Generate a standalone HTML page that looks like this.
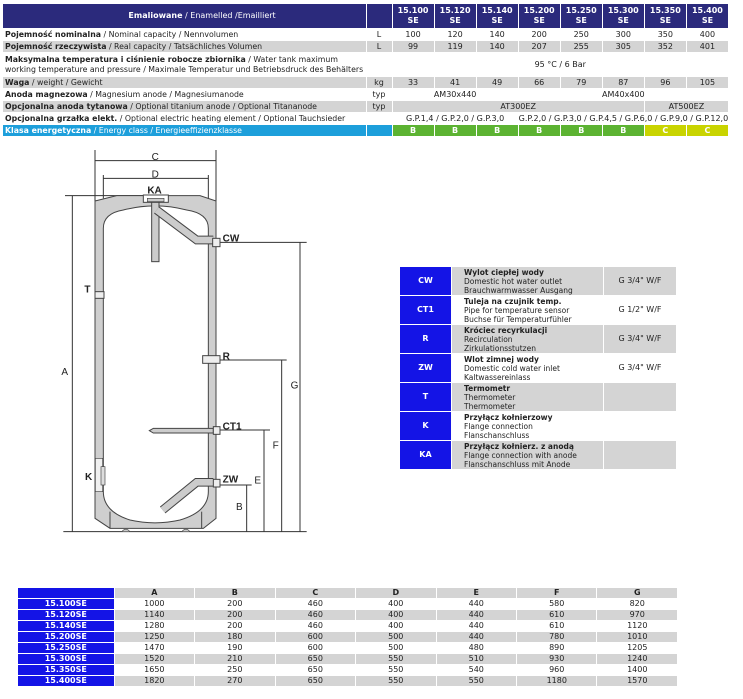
<!DOCTYPE html>
<html><head><meta charset="utf-8">
<style>
*{margin:0;padding:0;box-sizing:border-box}
body{width:743px;height:699px;background:#fff;position:relative;overflow:hidden;font-family:"DejaVu Sans","Liberation Sans",sans-serif;color:#222}
table{border-collapse:separate;border-spacing:1px;table-layout:fixed;position:absolute}
td{font-size:8px;white-space:nowrap;overflow:hidden;padding:0;line-height:10px}
#t1{left:2px;top:3px;width:727px}
#t1 td{text-align:center;height:11px}
#t1 td.l{text-align:left;padding-left:2px;font-size:7.8px}
.g{background:#d4d4d4}
.h{background:#2b2a7c;color:#fff;font-weight:bold}
.hb{background:#2b2a7c;color:#fff}
.cb{background:#1d9fdb;color:#fff}
.gr{background:#5cb332;color:#fff;font-weight:bold}
.ye{background:#c9d400;color:#fff;font-weight:bold}
#t2{left:399px;top:266px;width:278px}
#t2 td{height:28px;vertical-align:middle}
#t2 td.k{background:#1414e6;color:#fff;font-weight:bold;text-align:center;font-size:8px}
#t2 td.d{padding-left:12px;font-size:7.5px;line-height:9px}
#t2 td.v{text-align:center;font-size:8px}
#t3{left:17px;top:587px;width:661px}
#t3 td{height:10px;text-align:center;font-size:8px;line-height:10px}
#t3 td.bl{background:#1414e6;color:#fff;font-weight:bold}
</style></head><body>

<table id="t1">
<colgroup><col style="width:362px"><col style="width:25px"><col span="8" style="width:41px"></colgroup>
<tr style="height:24px"><td class="hb" style="height:24px">&nbsp;&nbsp;&nbsp;&nbsp;&nbsp;&nbsp;&nbsp;&nbsp;&nbsp;&nbsp;&nbsp;&nbsp;&nbsp;&nbsp;<b>Emaliowane</b> / Enamelled /Emailliert</td><td class="hb"></td>
<td class="h">15.100<br>SE</td><td class="h">15.120<br>SE</td><td class="h">15.140<br>SE</td><td class="h">15.200<br>SE</td><td class="h">15.250<br>SE</td><td class="h">15.300<br>SE</td><td class="h">15.350<br>SE</td><td class="h">15.400<br>SE</td></tr>
<tr><td class="l"><b>Pojemność nominalna</b> / Nominal capacity / Nennvolumen</td><td>L</td><td>100</td><td>120</td><td>140</td><td>200</td><td>250</td><td>300</td><td>350</td><td>400</td></tr>
<tr><td class="l g"><b>Pojemność rzeczywista</b> / Real capacity / Tatsächliches Volumen</td><td class="g">L</td><td class="g">99</td><td class="g">119</td><td class="g">140</td><td class="g">207</td><td class="g">255</td><td class="g">305</td><td class="g">352</td><td class="g">401</td></tr>
<tr><td class="l" style="height:23px"><b>Maksymalna temperatura i ciśnienie robocze zbiornika</b> / Water tank maximum<br>working temperature and pressure / Maximale Temperatur und Betriebsdruck des Behälters</td><td></td><td colspan="8">95 °C / 6 Bar</td></tr>
<tr><td class="l g"><b>Waga</b> / weight / Gewicht</td><td class="g">kg</td><td class="g">33</td><td class="g">41</td><td class="g">49</td><td class="g">66</td><td class="g">79</td><td class="g">87</td><td class="g">96</td><td class="g">105</td></tr>
<tr><td class="l"><b>Anoda magnezowa</b> / Magnesium anode / Magnesiumanode</td><td>typ</td><td colspan="3">AM30x440</td><td colspan="5">AM40x400</td></tr>
<tr><td class="l g"><b>Opcjonalna anoda tytanowa</b> / Optional titanium anode / Optional Titananode</td><td class="g">typ</td><td colspan="6" class="g">AT300EZ</td><td colspan="2" class="g">AT500EZ</td></tr>
<tr><td class="l"><b>Opcjonalna grzałka elekt.</b> / Optional electric heating element / Optional Tauchsieder</td><td></td><td colspan="3">G.P.1,4 / G.P.2,0 / G.P.3,0</td><td colspan="5">G.P.2,0 / G.P.3,0 / G.P.4,5 / G.P.6,0 / G.P.9,0 / G.P.12,0</td></tr>
<tr><td class="l cb"><b>Klasa energetyczna</b> / Energy class / Energieeffizienzklasse</td><td class="cb"></td><td class="gr">B</td><td class="gr">B</td><td class="gr">B</td><td class="gr">B</td><td class="gr">B</td><td class="gr">B</td><td class="ye">C</td><td class="ye">C</td></tr>
</table>

<svg style="position:absolute;left:40px;top:145px" width="300" height="400" viewBox="0 0 900 1200" font-family="Liberation Sans, sans-serif" font-size="30">
<g stroke="#333" stroke-width="3" fill="none">
<line x1="165" y1="15" x2="165" y2="170"/><line x1="528" y1="15" x2="528" y2="170"/>
<line x1="190" y1="90" x2="190" y2="160"/><line x1="505" y1="90" x2="505" y2="160"/>
<line x1="165" y1="47" x2="528" y2="47"/><line x1="190" y1="100" x2="505" y2="100"/>
<line x1="75" y1="152" x2="310" y2="152"/>
<line x1="97" y1="152" x2="97" y2="1160"/>
<line x1="70" y1="1160" x2="800" y2="1160"/>
<line x1="540" y1="292" x2="800" y2="292"/><line x1="780" y1="292" x2="780" y2="1160"/>
<line x1="540" y1="645" x2="740" y2="645"/><line x1="725" y1="645" x2="725" y2="1160"/>
<line x1="540" y1="855" x2="690" y2="855"/><line x1="672" y1="855" x2="672" y2="1160"/>
<line x1="540" y1="1020" x2="635" y2="1020"/><line x1="620" y1="1020" x2="620" y2="1160"/>
</g>
<path d="M165,168 L230,152 L480,152 L528,168 L528,1120 L490,1150 L210,1150 L165,1120 Z" fill="#cfcfcf" stroke="#444" stroke-width="3"/>
<path d="M190,250 Q190,205 250,195 Q345,170 440,195 Q505,205 505,250 L505,1040 Q505,1100 420,1125 Q345,1142 270,1125 Q190,1100 190,1040 Z" fill="#fff" stroke="#444" stroke-width="3"/>
<line x1="210" y1="1100" x2="210" y2="1150" stroke="#444" stroke-width="3"/><line x1="485" y1="1100" x2="485" y2="1150" stroke="#444" stroke-width="3"/>
<rect x="166" y="940" width="22" height="100" fill="#f0f0f0" stroke="#444" stroke-width="2"/>
<rect x="183" y="965" width="12" height="55" fill="#ddd" stroke="#444" stroke-width="2"/>
<rect x="310" y="150" width="75" height="22" fill="#fff" stroke="#444" stroke-width="3"/>
<rect x="322" y="160" width="50" height="10" fill="#ccc" stroke="#444" stroke-width="2"/>
<rect x="335" y="172" width="22" height="178" fill="#ccc" stroke="#444" stroke-width="3"/>
<polyline points="350,195 470,285 520,285" fill="none" stroke="#444" stroke-width="26"/>
<polyline points="350,195 470,285 520,285" fill="none" stroke="#ccc" stroke-width="20"/>
<rect x="518" y="280" width="22" height="25" fill="#eee" stroke="#444" stroke-width="3"/>
<rect x="165" y="440" width="27" height="20" fill="#eee" stroke="#444" stroke-width="3"/>
<rect x="488" y="632" width="52" height="23" fill="#eee" stroke="#444" stroke-width="3"/>
<path d="M340,850 L520,850 L520,864 L340,864 L328,857 Z" fill="#ccc" stroke="#444" stroke-width="3"/>
<rect x="520" y="845" width="20" height="23" fill="#eee" stroke="#444" stroke-width="3"/>
<polyline points="520,1012 470,1012 368,1095" fill="none" stroke="#444" stroke-width="26"/>
<polyline points="520,1012 470,1012 368,1095" fill="none" stroke="#ccc" stroke-width="20"/>
<rect x="520" y="1003" width="20" height="23" fill="#eee" stroke="#444" stroke-width="3"/>
<path d="M245,1160 Q258,1145 270,1160Z M425,1160 Q438,1145 450,1160Z" fill="#ccc" stroke="#444" stroke-width="2"/>
<g fill="#222">
<text x="335" y="45">C</text><text x="335" y="97">D</text>
<text x="322" y="145" font-weight="bold">KA</text>
<text x="548" y="290" font-weight="bold">CW</text>
<text x="133" y="442" font-weight="bold">T</text>
<text x="548" y="643" font-weight="bold">R</text>
<text x="548" y="853" font-weight="bold">CT1</text>
<text x="548" y="1012" font-weight="bold">ZW</text>
<text x="135" y="1005" font-weight="bold">K</text>
<text x="64" y="690">A</text><text x="752" y="730">G</text>
<text x="698" y="910">F</text><text x="643" y="1015">E</text>
<text x="588" y="1095">B</text>
</g>
</svg>

<table id="t2">
<colgroup><col style="width:51px"><col style="width:151px"><col style="width:72px"></colgroup>
<tr><td class="k">CW</td><td class="d g"><b>Wylot ciepłej wody</b><br>Domestic hot water outlet<br>Brauchwarmwasser Ausgang</td><td class="v g">G 3/4" W/F</td></tr>
<tr><td class="k">CT1</td><td class="d"><b>Tuleja na czujnik temp.</b><br>Pipe for temperature sensor<br>Buchse für Temperaturfühler</td><td class="v">G 1/2" W/F</td></tr>
<tr><td class="k">R</td><td class="d g"><b>Króciec recyrkulacji</b><br>Recirculation<br>Zirkulationsstutzen</td><td class="v g">G 3/4" W/F</td></tr>
<tr><td class="k">ZW</td><td class="d"><b>Wlot zimnej wody</b><br>Domestic cold water inlet<br>Kaltwassereinlass</td><td class="v">G 3/4" W/F</td></tr>
<tr><td class="k">T</td><td class="d g"><b>Termometr</b><br>Thermometer<br>Thermometer</td><td class="v g"></td></tr>
<tr><td class="k">K</td><td class="d"><b>Przyłącz kołnierzowy</b><br>Flange connection<br>Flanschanschluss</td><td class="v"></td></tr>
<tr><td class="k">KA</td><td class="d g"><b>Przyłącz kołnierz. z anodą</b><br>Flange connection with anode<br>Flanschanschluss mit Anode</td><td class="v g"></td></tr>
</table>

<table id="t3">
<colgroup><col style="width:95px"><col span="7" style="width:79px"></colgroup>
<tr><td class="bl"></td><td class="g"><b>A</b></td><td class="g"><b>B</b></td><td class="g"><b>C</b></td><td class="g"><b>D</b></td><td class="g"><b>E</b></td><td class="g"><b>F</b></td><td class="g"><b>G</b></td></tr>
<tr><td class="bl">15.100SE</td><td>1000</td><td>200</td><td>460</td><td>400</td><td>440</td><td>580</td><td>820</td></tr>
<tr><td class="bl">15.120SE</td><td class="g">1140</td><td class="g">200</td><td class="g">460</td><td class="g">400</td><td class="g">440</td><td class="g">610</td><td class="g">970</td></tr>
<tr><td class="bl">15.140SE</td><td>1280</td><td>200</td><td>460</td><td>400</td><td>440</td><td>610</td><td>1120</td></tr>
<tr><td class="bl">15.200SE</td><td class="g">1250</td><td class="g">180</td><td class="g">600</td><td class="g">500</td><td class="g">440</td><td class="g">780</td><td class="g">1010</td></tr>
<tr><td class="bl">15.250SE</td><td>1470</td><td>190</td><td>600</td><td>500</td><td>480</td><td>890</td><td>1205</td></tr>
<tr><td class="bl">15.300SE</td><td class="g">1520</td><td class="g">210</td><td class="g">650</td><td class="g">550</td><td class="g">510</td><td class="g">930</td><td class="g">1240</td></tr>
<tr><td class="bl">15.350SE</td><td>1650</td><td>250</td><td>650</td><td>550</td><td>540</td><td>960</td><td>1400</td></tr>
<tr><td class="bl">15.400SE</td><td class="g">1820</td><td class="g">270</td><td class="g">650</td><td class="g">550</td><td class="g">550</td><td class="g">1180</td><td class="g">1570</td></tr>
</table>
</body></html>
